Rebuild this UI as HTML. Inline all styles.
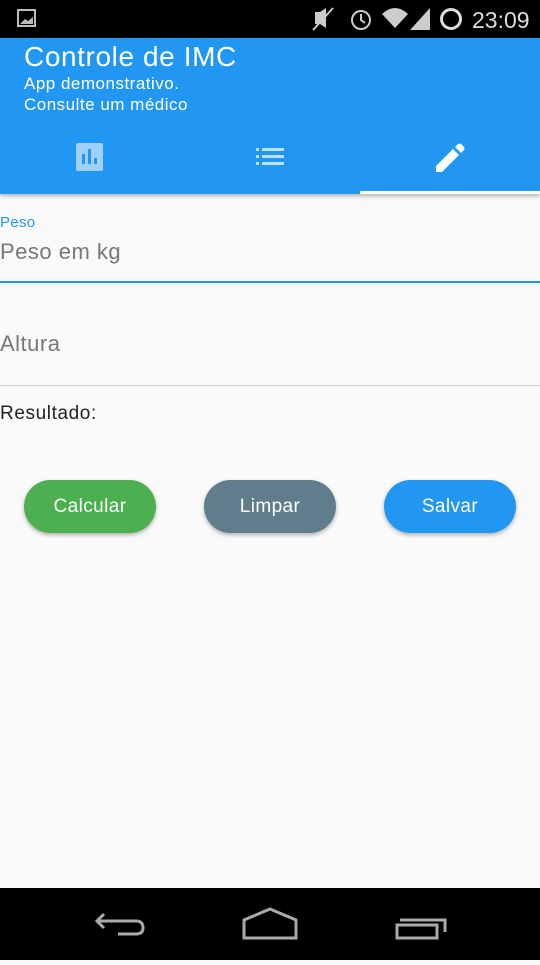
<!DOCTYPE html>
<html><head><meta charset="utf-8"><style>
*{margin:0;padding:0;box-sizing:border-box}
body{width:540px;height:960px;background:#fafafa;font-family:"Liberation Sans",sans-serif;position:relative;overflow:hidden}
.sb{position:absolute;top:0;left:0;width:540px;height:38px;background:#000;color:#ddd}
.app{position:absolute;top:38px;left:0;width:540px;height:156px;background:#2196f3;color:#fff;box-shadow:0 2px 4px rgba(0,0,0,.3)}
.t{position:absolute;left:24px;top:3px;font-size:28px;letter-spacing:.6px}
.s{position:absolute;left:24px;font-size:17px;letter-spacing:.5px}
.ind{position:absolute;left:360px;top:153px;width:180px;height:3px;background:#fff}
.lbl{position:absolute;left:0;font-size:17px;color:#777}
.btn{position:absolute;top:480px;width:132px;height:53px;border-radius:27px;color:#fff;font-size:19px;letter-spacing:.4px;text-align:center;line-height:53px;box-shadow:0 2px 4px rgba(0,0,0,.3)}
.nav{position:absolute;top:888px;left:0;width:540px;height:72px;background:#000}
</style></head><body>
<div class="sb">
<svg width="540" height="38" style="position:absolute;left:0;top:0">
<rect x="18" y="10" width="17" height="16" fill="none" stroke="#bbb" stroke-width="2"/>
<path d="M20 24 L25 19 L28 21 L33 17 V24Z" fill="#bbb"/>
<path d="M315 12 L320 12 L326 8 V28 L320 24 L315 24Z" fill="#ccc"/><line x1="313" y1="30" x2="333" y2="8" stroke="#ccc" stroke-width="2"/>
<circle cx="361" cy="20" r="9" fill="none" stroke="#ccc" stroke-width="2"/><path d="M361 14 V20 L365 23" stroke="#ccc" stroke-width="2" fill="none"/>
<path d="M382 14 Q395 2 408 14 L395 28Z" fill="#ccc"/>
<path d="M410 30 L430 8 V30Z" fill="#ccc"/>
<circle cx="451" cy="19" r="9.5" fill="none" stroke="#ddd" stroke-width="3"/>
<text x="472" y="28" fill="#ddd" font-size="23" font-family="Liberation Sans">23:09</text>
</svg></div>
<div class="app">
<div class="t">Controle de IMC</div>
<div class="s" style="top:36px">App demonstrativo.</div>
<div class="s" style="top:57px">Consulte um médico</div>
<svg width="540" height="60" style="position:absolute;top:96px;left:0">
<rect x="76" y="9" width="27" height="28" rx="2" fill="#9fd0fa"/>
<rect x="82" y="20" width="3" height="10" fill="#2196f3"/><rect x="88" y="15" width="3" height="15" fill="#2196f3"/><rect x="94" y="24" width="3" height="6" fill="#2196f3"/>
<g fill="#bfe0fb"><rect x="256" y="14" width="3" height="3"/><rect x="262" y="14" width="22" height="3"/><rect x="256" y="21" width="3" height="3"/><rect x="262" y="21" width="22" height="3"/><rect x="256" y="28" width="3" height="3"/><rect x="262" y="28" width="22" height="3"/></g>
<path d="M436 32 V38 H442 L459 21 L453 15Z M455 13 L458 10 Q460 9 461 10 L464 13 Q465 15 464 16 L461 19Z" fill="#fff"/>
</svg>
<div class="ind"></div>
</div>
<div style="position:absolute;left:0;top:214px;font-size:15px;color:#2196f3;letter-spacing:.3px">Peso</div>
<div class="lbl" style="top:239px;font-size:22px;letter-spacing:.5px">Peso em kg</div>
<div style="position:absolute;left:0;top:281px;width:540px;height:2px;background:#2196f3"></div>
<div class="lbl" style="top:331px;font-size:22px;letter-spacing:.5px">Altura</div>
<div style="position:absolute;left:0;top:385px;width:540px;height:1px;background:#ccc"></div>
<div style="position:absolute;left:0;top:403px;font-size:19px;letter-spacing:.6px;color:#222">Resultado:</div>
<div class="btn" style="left:24px;background:#4caf50">Calcular</div>
<div class="btn" style="left:204px;background:#607d8b">Limpar</div>
<div class="btn" style="left:384px;background:#2196f3">Salvar</div>
<div class="nav"><svg width="540" height="72">
<path d="M104 26 L97 33 L104 40 M97 33 H136 Q143 33 143 40 Q143 46 136 46 H118" fill="none" stroke="#aaa" stroke-width="3"/>
<path d="M244 50 V32 L270 21 L296 32 V50Z" fill="none" stroke="#aaa" stroke-width="3"/>
<rect x="397" y="37" width="40" height="13" fill="none" stroke="#aaa" stroke-width="3"/>
<path d="M400 32 H445 V44" fill="none" stroke="#aaa" stroke-width="3"/>
</svg></div>
</body></html>
